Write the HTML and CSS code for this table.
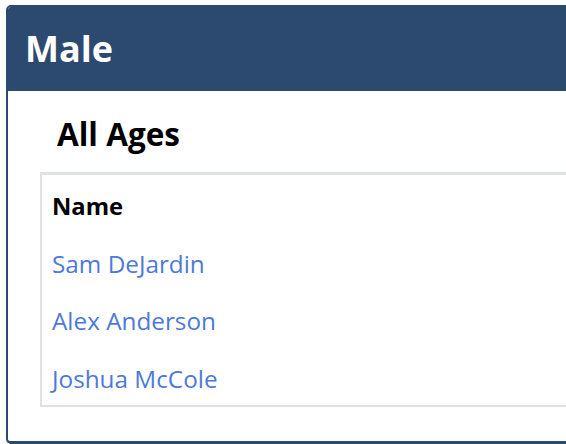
FILE: index.html
```html
<!DOCTYPE html>
<html>
<head>
<meta charset="utf-8">
<link rel="stylesheet" href="styles.css">
</head>
<body>
<div class="card">
  <div class="card-header"><h1 class="title">Male</h1></div>
  <div class="card-body">
    <h2 class="group">All Ages</h2>
    <table class="list">
      <thead><tr><th>Name</th></tr></thead>
      <tbody>
        <tr><td><a href="#">Sam DeJardin</a></td></tr>
        <tr><td><a href="#">Alex Anderson</a></td></tr>
        <tr><td><a href="#">Joshua McCole</a></td></tr>
      </tbody>
    </table>
  </div>
</div>
</body>
</html>
```
FILE: styles.css
```css
html, body {
  margin: 0;
  padding: 0;
  overflow: hidden;
  background: #fff;
}
body {
  font-family: "Open Sans", "Noto Sans", sans-serif;
  color: #000;
}
.card {
  margin: 5px 0 0 6px;
  width: 600px;
  border: 2px solid #2c4970;
  border-bottom-width: 3px;
  border-radius: 5px;
  overflow: hidden;
}
.card-header {
  background: #2c4970;
  height: 84px;
  display: flex;
  align-items: center;
  padding-left: 17px;
}
.title {
  margin: 0;
  color: #fff;
  font-size: 36px;
  font-weight: 700;
  line-height: 1;
}
.card-body {
  padding: 24px 32px 34px 32px;
}
.group {
  margin: 0 0 20px 17px;
  font-size: 31.5px;
  font-weight: 700;
  line-height: 37px;
}
.list {
  width: 100%;
  border-collapse: collapse;
  border-top: 3px solid #dfe1e3;
  border-left: 2px solid #dfe1e3;
  border-bottom: 2px solid #dfe1e3;
}
.list th, .list td {
  text-align: left;
  padding: 14px 10px 10px 10px;
  font-size: 24.3px;
  line-height: 33.5px;
}
.list th { font-weight: 700; font-size: 23.8px; padding-top: 15px; padding-bottom: 9px; }
.list a {
  color: #4d79d9;
  text-decoration: none;
}
```
